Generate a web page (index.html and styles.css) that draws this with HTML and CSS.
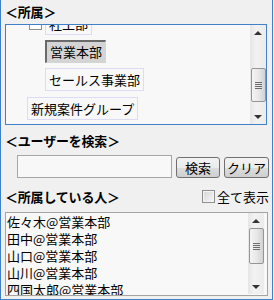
FILE: index.html
```html
<!DOCTYPE html>
<html lang="ja">
<head>
    <meta charset="UTF-8">
    <title>所属</title>
    <link rel="stylesheet" href="styles.css">
</head>
<body>
    <div class="panel">
        <div class="title">＜所属＞</div>
        <div class="tree">
            <div class="tree-body">
                <div class="node node-top">
                    <span class="toggle"></span>
                    <span class="label">社工部</span>
                </div>
                <div class="node node-leaf">
                    <span class="label selected">営業本部</span>
                </div>
                <div class="node node-leaf">
                    <span class="label">セールス事業部</span>
                </div>
                <div class="node node-root">
                    <span class="label">新規案件グループ</span>
                </div>
            </div>
            <div class="scroll tree-scroll">
                <span class="arrow up"></span>
                <span class="thumb"><i></i><i></i><i></i><i></i></span>
                <span class="arrow down"></span>
            </div>
        </div>

        <div class="title title-search">＜ユーザーを検索＞</div>
        <div class="search">
            <input class="search-input" type="text">
            <button class="btn btn-search">検索</button>
            <button class="btn btn-clear">クリア</button>
        </div>

        <div class="title title-members">
            <span>＜所属している人＞</span>
            <label class="show-all"><span class="check"></span>全て表示</label>
        </div>
        <div class="list">
            <ul class="list-body">
                <li>佐々木@営業本部</li>
                <li>田中@営業本部</li>
                <li>山口@営業本部</li>
                <li>山川@営業本部</li>
                <li>四国太郎@営業本部</li>
            </ul>
            <div class="scroll list-scroll">
                <span class="arrow up"></span>
                <span class="thumb"><i></i><i></i><i></i><i></i></span>
                <span class="arrow down"></span>
            </div>
        </div>
    </div>
</body>
</html>
```

FILE: styles.css
```css
body {
    margin: 0;
    background: #f0f0f0;
    font-family: "Noto Sans CJK JP", "Noto Sans", sans-serif;
    color: #000;
}

.panel {
    box-sizing: border-box;
    width: 273px;
    height: 300px;
    padding-left: 4px;
    background: #f0f0f0;
    border: 1px solid #3f80c6;
    border-top: none;
}

.title {
    height: 24px;
    line-height: 24px;
    font-size: 13px;
    font-weight: bold;
    letter-spacing: -0.2px;
}

/* tree */
.tree {
    box-sizing: border-box;
    width: 262px;
    height: 101px;
    border: 1px solid #3f80c6;
    background: #f8f8f8;
    display: flex;
}
.tree-body {
    flex: 1;
    overflow: hidden;
}
.node {
    display: flex;
    align-items: center;
    height: 23px;
    margin-top: 5px;
    font-size: 13px;
}
.node-top {
    margin-top: -13px;
    padding-left: 23px;
}
.node-leaf {
    padding-left: 39px;
}
.node-root {
    margin-top: 6px;
    padding-left: 21px;
}
.toggle {
    box-sizing: border-box;
    width: 13px;
    height: 13px;
    margin-right: 3px;
    border: 1px solid #919191;
    background: #fff;
    position: relative;
}
.toggle::after {
    content: "";
    position: absolute;
    left: 2px;
    right: 2px;
    top: 5px;
    height: 1px;
    background: #444;
}
.label {
    box-sizing: border-box;
    height: 23px;
    line-height: 21px;
    padding: 0 3px;
    border: 1px solid #dcdcf6;
    white-space: nowrap;
}
.label.selected {
    background: #d4d4d4;
    border: 1px solid #d4d4d4;
    border-top: 2px solid #6a6a6a;
    border-left: 2px solid #6a6a6a;
    line-height: 20px;
}

/* fake scrollbars */
.scroll {
    width: 16px;
    display: flex;
    flex-direction: column;
    align-items: center;
    background: linear-gradient(to right, #e6e6e6, #f2f2f2 40%, #ebebeb);
}
.arrow {
    width: 0;
    height: 0;
    border-left: 4px solid transparent;
    border-right: 4px solid transparent;
}
.arrow.up {
    margin-top: 6px;
    border-bottom: 4px solid #333;
}
.arrow.down {
    margin-bottom: 5px;
    border-top: 4px solid #333;
}
.thumb {
    box-sizing: border-box;
    width: 15px;
    border: 1px solid #959595;
    border-radius: 2px;
    background: linear-gradient(to right, #f4f4f4, #e8e8e8 50%, #d2d2d2);
    display: flex;
    flex-direction: column;
    justify-content: center;
    align-items: center;
    gap: 1px;
}
.thumb i {
    width: 7px;
    height: 1px;
    background: #6c6c6c;
}
.tree-scroll .thumb {
    height: 34px;
    margin-top: 33px;
    margin-bottom: auto;
}
.list-scroll .thumb {
    height: 36px;
    margin-top: 5px;
    margin-bottom: auto;
}

/* search */
.title-search {
    height: 30px;
    line-height: 31px;
}
.search {
    display: flex;
    align-items: flex-end;
    height: 23px;
}
.search-input {
    box-sizing: border-box;
    width: 155px;
    height: 23px;
    margin: 0 0 0 12px;
    padding: 0 3px;
    border: 1px solid #a6a6a6;
    background: #f8f8f8;
}
.btn {
    box-sizing: border-box;
    height: 21px;
    padding: 0;
    border: 1px solid #707070;
    border-radius: 3px;
    background: linear-gradient(#f2f2f2, #ebebeb 50%, #dddddd 51%, #cfcfcf);
    font-family: "Noto Sans CJK JP", sans-serif;
    font-size: 13px;
    line-height: 18px;
    color: #000;
}
.btn-search {
    width: 44px;
    margin-left: 4px;
}
.btn-clear {
    width: 45px;
    margin-left: 4px;
}

/* members */
.title-members {
    display: flex;
    justify-content: space-between;
    align-items: center;
    height: 34px;
    padding-top: 3px;
    box-sizing: border-box;
}
.show-all {
    display: flex;
    align-items: center;
    font-weight: normal;
    font-size: 13px;
    letter-spacing: 0;
    margin-right: 3px;
}
.check {
    box-sizing: border-box;
    width: 13px;
    height: 13px;
    margin-right: 2px;
    border: 1px solid #8e8e8e;
    background: linear-gradient(135deg, #d6d6d6, #f6f6f6);
    box-shadow: inset 0 0 0 1px #f4f4f4;
}
.list {
    box-sizing: border-box;
    width: 263px;
    height: 84px;
    border: 1px solid #a3a3a3;
    background: #f8f8f8;
    display: flex;
}
.list-body {
    flex: 1;
    margin: 0;
    padding: 0 0 0 1px;
    list-style: none;
    overflow: hidden;
    font-size: 13px;
    line-height: 17px;
}
.list-scroll {
    height: 81px;
    margin-right: 3px;
}
```
